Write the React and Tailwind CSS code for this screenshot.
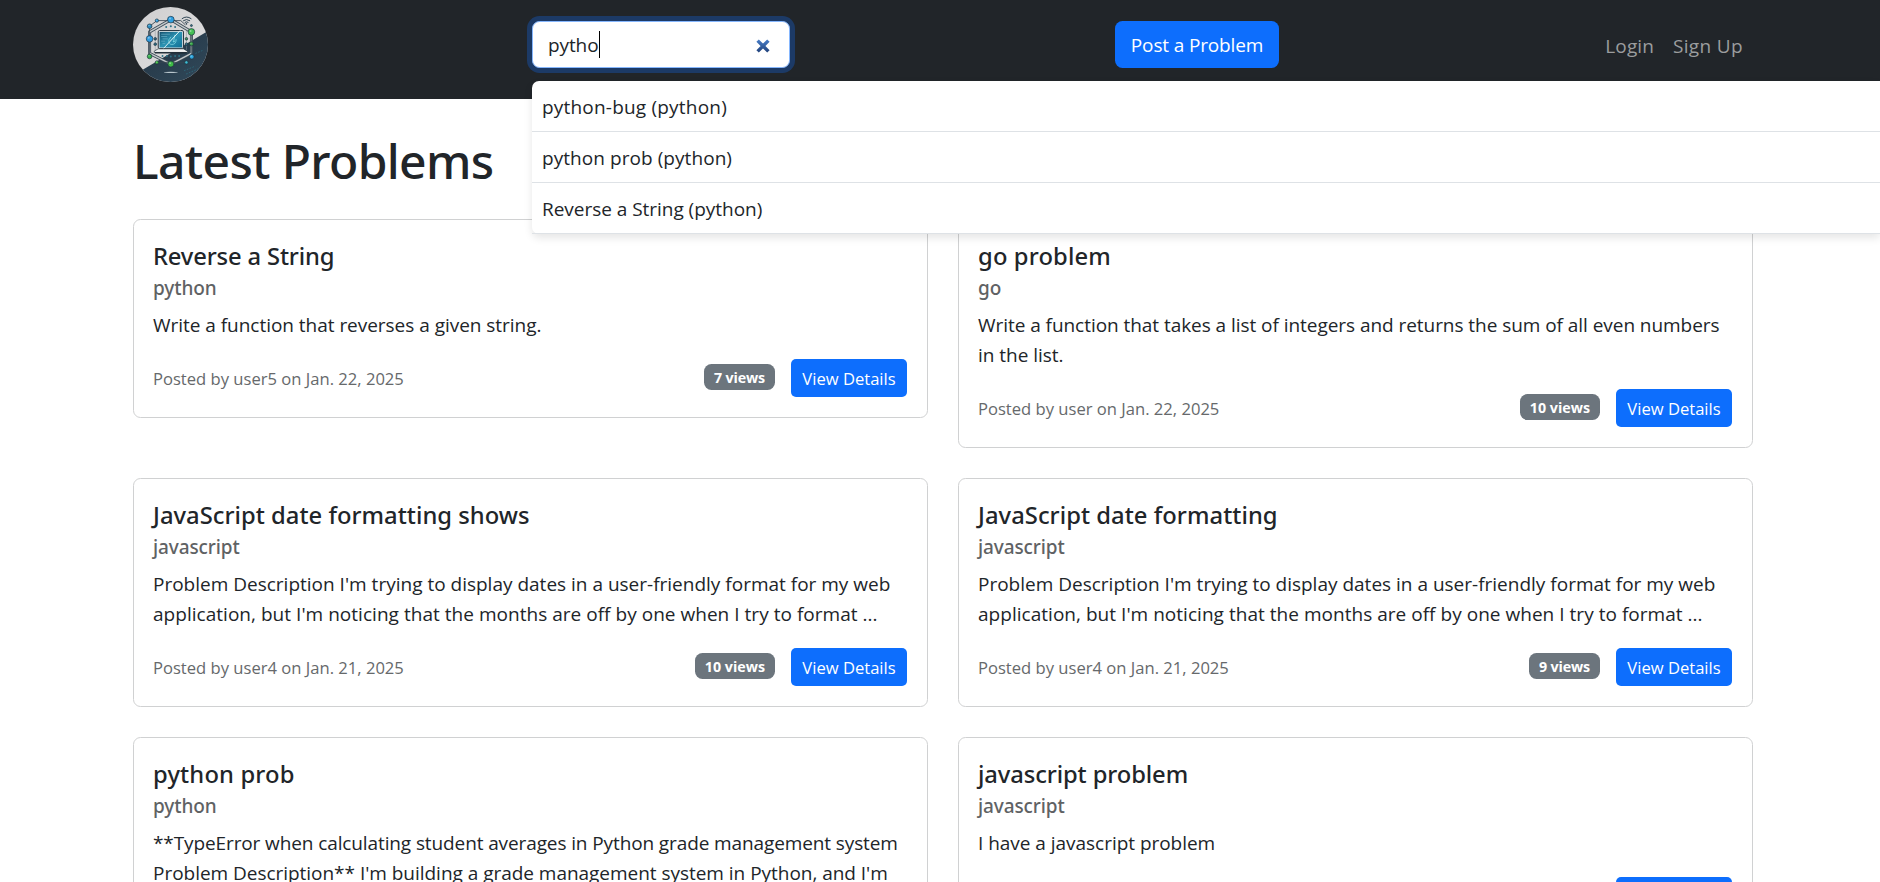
const PROBLEMS = [
  {
    title: "Reverse a String",
    titleClass: "tracking-[-0.15px]",
    language: "python",
    text: [["Write a function that reverses a given string.", "tracking-[-0.03px]"]],
    meta: "Posted by user5 on Jan. 22, 2025",
    views: "7 views",
    viewsClass: "tracking-[-0.15px]",
  },
  {
    title: "go problem",
    titleClass: "tracking-[0.15px]",
    language: "go",
    text: [
      ["Write a function that takes a list of integers and returns the sum of all even numbers", "tracking-[-0.05px]"],
      ["in the list.", "tracking-[-0.03px]"],
    ],
    meta: "Posted by user on Jan. 22, 2025",
    views: "10 views",
  },
  {
    title: "JavaScript date formatting shows",
    titleClass: "tracking-[0.03px]",
    language: "javascript",
    text: [
      ["Problem Description I'm trying to display dates in a user-friendly format for my web", "tracking-[0px]"],
      ["application, but I'm noticing that the months are off by one when I try to format ...", "tracking-[0.03px]"],
    ],
    meta: "Posted by user4 on Jan. 21, 2025",
    views: "10 views",
  },
  {
    title: "JavaScript date formatting",
    titleClass: "tracking-[0.05px]",
    language: "javascript",
    text: [
      ["Problem Description I'm trying to display dates in a user-friendly format for my web", "tracking-[0px]"],
      ["application, but I'm noticing that the months are off by one when I try to format ...", "tracking-[0.03px]"],
    ],
    meta: "Posted by user4 on Jan. 21, 2025",
    views: "9 views",
    viewsClass: "tracking-[-0.15px]",
  },
  {
    title: "python prob",
    titleClass: "tracking-[0.15px]",
    language: "python",
    text: [
      ["**TypeError when calculating student averages in Python grade management system", "tracking-[-0.11px]"],
      ["Problem Description** I'm building a grade management system in Python, and I'm", "tracking-[-0.03px]"],
    ],
    meta: "Posted by user4 on Jan. 21, 2025",
    views: "12 views",
  },
  {
    title: "javascript problem",
    titleClass: "tracking-[-0.1px]",
    language: "javascript",
    text: [["I have a javascript problem", "tracking-[-0.03px]"]],
    meta: "Posted by user4 on Jan. 21, 2025",
    views: "8 views",
  },
];

const SUGGESTIONS = [
  { label: "python-bug (python)", className: "tracking-[0.2px]" },
  { label: "python prob (python)", className: "tracking-[0.06px]" },
  { label: "Reverse a String (python)", className: "tracking-[-0.03px]" },
];

const NODES = [
  [152, 58, 10, "#2f9fe0"],
  [88, 78, 7, "#2b8fc4"],
  [110, 61, 5, "#2f9fe0"],
  [88, 116, 10, "#2f9be0"],
  [88, 169, 7, "#35b04a"],
  [110, 187, 5, "#46c048"],
  [152, 192, 9, "#3dbb45"],
  [215, 170, 7, "#2fa8e0"],
  [199, 187, 5, "#35b8d0"],
  [214, 95, 10, "#45bf55"],
  [214, 131, 6, "#3aa648"],
  [105, 116, 4, "#2c5a70"],
  [105, 132, 4, "#2c6a80"],
  [199, 116, 4, "#2f8a50"],
  [199, 132, 4, "#2c6a80"],
  [214, 76, 3, "#2b6a80"],
];

const DOTS = [
  [138, 80], [152, 78], [165, 80], [127, 168], [140, 168], [152, 169], [165, 168], [177, 168],
];

function Logo() {
  return (
    <svg viewBox="38 20 226 226" className="h-[75px] w-[75px]">
      <defs>
        <clipPath id="logo-clip">
          <circle cx="151" cy="133" r="113" />
        </clipPath>
        <linearGradient id="logo-light" x1="0" y1="0" x2="1" y2="1">
          <stop offset="0" stopColor="#cfcfd0" />
          <stop offset="1" stopColor="#e2e1e1" />
        </linearGradient>
        <linearGradient id="logo-dark" x1="0" y1="0" x2="1" y2="1">
          <stop offset="0" stopColor="#243443" />
          <stop offset="1" stopColor="#30495a" />
        </linearGradient>
        <linearGradient id="logo-screen" x1="0" y1="0" x2="1" y2="1">
          <stop offset="0" stopColor="#16506e" />
          <stop offset="0.5" stopColor="#2b93b3" />
          <stop offset="1" stopColor="#0f6f95" />
        </linearGradient>
      </defs>
      <g clipPath="url(#logo-clip)">
        <rect x="38" y="20" width="226" height="226" fill="url(#logo-light)" />
        <path d="M264 92 L66 210 L66 246 H264 Z" fill="url(#logo-dark)" />
        <path d="M192 212 l34 -14 M198 222 l42 -18 M208 230 l26 -11 M226 160 l24 -10" stroke="#2f7385" strokeWidth="2" strokeDasharray="5 4" fill="none" />
        <g fill="none" strokeLinejoin="round">
          <path d="M152 58 L214 95 V160 L152 192 L88 160 V95 Z" stroke="#3c4b57" strokeWidth="9" />
          <path d="M152 58 L214 95 V160 L152 192 L88 160 V95 Z" stroke="#c4c9cb" strokeWidth="4" />
          <path d="M110 61 H182 L196 74 M88 78 V169 M110 187 H199 M215 95 V170 M88 78 L110 61" stroke="#34434f" strokeWidth="2.5" />
          <path d="M105 92 V150 M199 92 V150" stroke="#8a959c" strokeWidth="1.5" />
        </g>
        <path d="M186 55 Q199 45 213 55 M190 61 Q199 54 209 61 M195 66 Q199 63 204 66" fill="none" stroke="#2d4352" strokeWidth="3" strokeLinecap="round" />
        <circle cx="199" cy="71" r="2.5" fill="#2d4352" />
        {DOTS.map(([x, y]) => (
          <circle key={`${x}-${y}`} cx={x} cy={y} r="3" fill="#2d7286" />
        ))}
        <rect x="114" y="91" width="76" height="54" rx="4" fill="#dfe6e9" stroke="#22303b" strokeWidth="3" />
        <rect x="118" y="95" width="68" height="47" fill="url(#logo-screen)" />
        <path d="M123 102 h26 M123 109 h18 M127 116 h16 M123 123 h12 M127 130 h8" stroke="#5fa9c0" strokeWidth="2.5" />
        <path d="M146 118 q-2 14 9 15 q13 0 13 -16 M152 110 l-5 8 M164 104 l-4 22 M158 124 q4 3 7 -2" fill="none" stroke="#7ad3e0" strokeWidth="2.5" />
        <path d="M180 91 L130 145" stroke="#dff2f5" strokeWidth="3" />
        <path d="M114 146 H190 L202 153 V157 H102 V153 Z" fill="#f0f1f1" stroke="#22303b" strokeWidth="2" />
        <rect x="104" y="156" width="96" height="4" fill="#1c2933" />
        {NODES.map(([x, y, r, fill]) => (
          <g key={`${x}-${y}`}>
            <circle cx={x} cy={y} r={r} fill={fill} stroke="#1f3442" strokeWidth="2" />
            <circle cx={x - r * 0.25} cy={y - r * 0.3} r={r * 0.3} fill="#ffffff" opacity="0.4" />
          </g>
        ))}
        <ellipse cx="152" cy="217" rx="21" ry="2" fill="#b8c6cd" />
      </g>
    </svg>
  );
}

function Suggestions() {
  return (
    <ul className="absolute top-[60px] left-0 z-10 w-[1348px] rounded-l-[7px] bg-white shadow-[0_4px_8px_rgba(0,0,0,0.1)]">
      {SUGGESTIONS.map((item) => (
        <li
          key={item.label}
          className="flex h-[51px] items-center border-b border-[#dee2e6] px-2.5 pt-[3px] text-[19px]"
        >
          <span className={item.className}>{item.label}</span>
        </li>
      ))}
    </ul>
  );
}

function SearchBox() {
  return (
    <div className="relative w-[258px]">
      <div className="flex h-[47px] items-center justify-between rounded-[7.5px] border border-[#86b7fe] bg-white pr-[19px] pl-[15px] shadow-[0_0_0_5px_#1c3a66]">
        <div className="flex items-center">
          <span className="pt-0.5 text-[19px] tracking-[-0.1px]">pytho</span>
          <span className="h-[27px] w-px bg-black" />
        </div>
        <svg viewBox="0 0 14 14" className="mt-0.5 h-[14px] w-[14px]">
          <defs>
            <linearGradient id="clear-fill" x1="0" y1="0" x2="0" y2="14" gradientUnits="userSpaceOnUse">
              <stop offset="0" stopColor="#4a80cc" />
              <stop offset="1" stopColor="#1f3f77" />
            </linearGradient>
          </defs>
          <path d="M1.6 1.6 L12.4 12.4 M12.4 1.6 L1.6 12.4" stroke="url(#clear-fill)" strokeWidth="3.4" />
        </svg>
      </div>
      <Suggestions />
    </div>
  );
}

function Card({ title, titleClass, language, text, meta, views, viewsClass = "" }) {
  return (
    <article className="rounded-[7.5px] border border-[#d0d1d2] bg-white pt-[21px] pr-5 pb-5 pl-[19px]">
      <h5 className={`font-['Noto_Sans'] text-[23.75px] leading-[30px] font-medium ${titleClass}`}>{title}</h5>
      <h6 className="mt-[5px] font-['Noto_Sans'] text-[19px] leading-6 font-medium tracking-[-0.1px] text-[#5f6264]">
        {language}
      </h6>
      <p className="mt-2.5 text-[19px] leading-[30px] whitespace-nowrap">
        {text.map(([line, lineClass]) => (
          <span key={line} className={`block ${lineClass}`}>
            {line}
          </span>
        ))}
      </p>
      <div className="mt-[19px] flex items-center justify-between">
        <small className="pt-0.5 text-[16.6px] text-[#66696b]">{meta}</small>
        <div className="flex items-center gap-4">
          <span className={`mb-0.5 flex h-[26px] items-center rounded-[7.5px] bg-[#6c757d] px-2.5 pt-px text-[14.25px] font-bold text-white ${viewsClass}`}>
            {views}
          </span>
          <button className="flex h-[38px] w-[116px] items-center justify-center rounded-[5px] bg-[#0d6efd] pt-0.5 text-[16.6px] text-white">
            View Details
          </button>
        </div>
      </div>
    </article>
  );
}

export default function App() {
  return (
    <div className="h-[882px] overflow-hidden bg-white font-['Open_Sans',sans-serif] text-[#212529]">
      <nav className="flex h-[99px] items-start bg-[#212529] pr-[137px] pl-[133px]">
        <div className="w-[399px] pt-[7px]">
          <Logo />
        </div>
        <div className="w-[583px] pt-[21px]">
          <SearchBox />
        </div>
        <div className="pt-[21px]">
          <button className="flex h-[47px] w-[164px] items-center justify-center rounded-[7.5px] bg-[#0d6efd] pt-0.5 text-[19px] tracking-[-0.15px] text-white">
            Post a Problem
          </button>
        </div>
        <div className="mt-[21px] ml-auto flex h-[47px] items-center gap-[19px] pt-[3px] text-[19px] text-[#9b9d9e]">
          <a className="tracking-[0.1px]">Login</a>
          <a className="tracking-[0.35px]">Sign Up</a>
        </div>
      </nav>
      <main className="px-[133px] pt-8">
        <h1 className="mb-7 font-['Noto_Sans'] text-[48px] leading-[60px] font-medium tracking-[-0.65px]">
          Latest Problems
        </h1>
        <div className="grid w-[1620px] grid-cols-2 items-start gap-[30px]">
          {PROBLEMS.map((p) => (
            <Card key={p.title} {...p} />
          ))}
        </div>
      </main>
    </div>
  );
}
